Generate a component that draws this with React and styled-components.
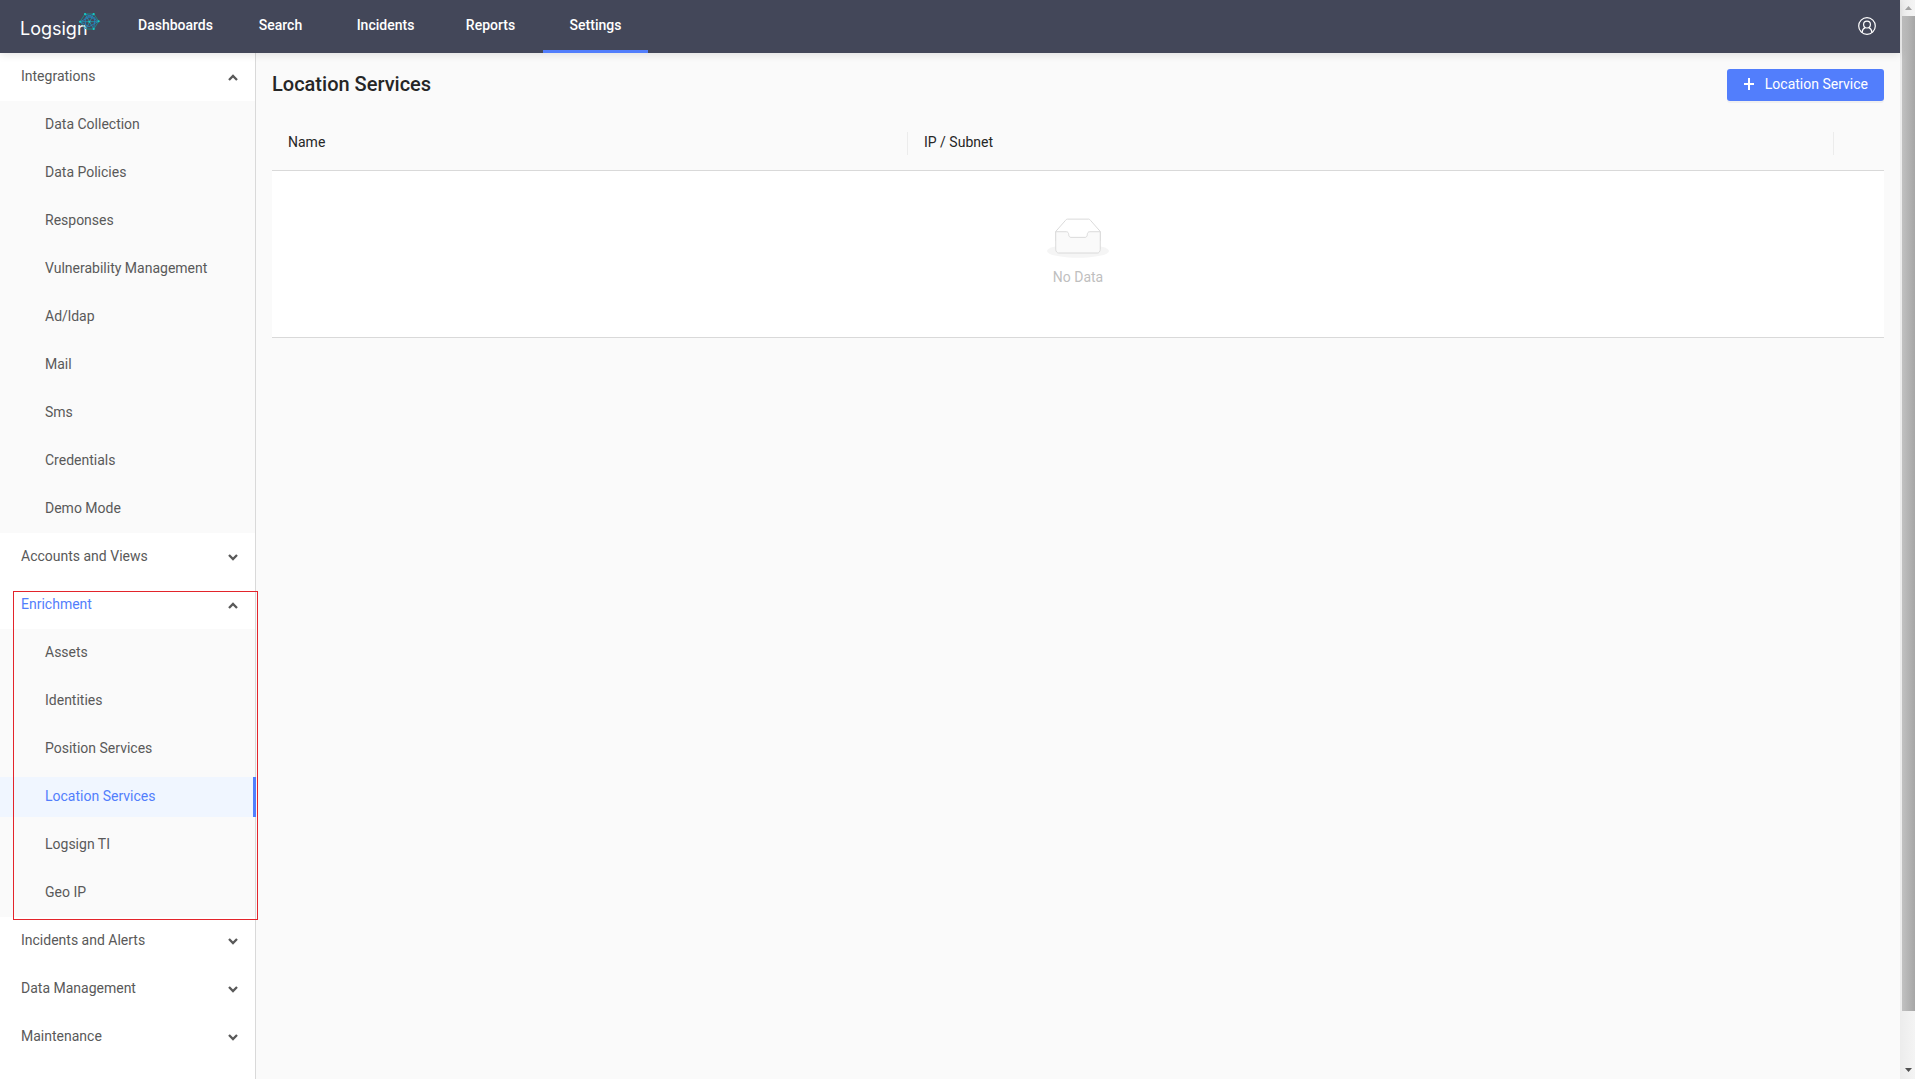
import React, { useState } from 'react'
import styled, { createGlobalStyle } from 'styled-components'

const GlobalStyle = createGlobalStyle`
    * {
        box-sizing: border-box;
    }
    body {
        margin: 0;
        font-family: Roboto, 'Liberation Sans', sans-serif;
        font-size: 14px;
        line-height: 22px;
        color: #262626;
        background-color: #fafafa;
        overflow: hidden;
    }
`

const Window = styled.div`
    display: flex;
    height: 100vh;
`
const Page = styled.div`
    flex: 1;
    display: flex;
    flex-direction: column;
    min-width: 0;
`

// header
const Header = styled.header`
    display: flex;
    align-items: center;
    height: 53px;
    flex-shrink: 0;
    padding: 0 24px 0 20px;
    background-color: #434759;
    box-shadow: 0 2px 8px rgba(0, 0, 0, 0.1);
    z-index: 1;
`
const LogoLink = styled.a`
    display: flex;
    width: 80px;
    margin-right: 23px;
`
const Nav = styled.nav`
    display: flex;
    flex: 1;
    height: 100%;
`
const NavLink = styled.a`
    width: 105px;
    height: 100%;
    padding-top: 14px;
    text-align: center;
    font-weight: 500;
    color: #fff;
    text-decoration: none;
    border-bottom: 3px solid ${props => (props.$active ? '#527efc' : 'transparent')};
`
const UserButton = styled.button`
    display: flex;
    padding: 0 0 1px;
    border: 0;
    background: none;
    color: #fff;
    cursor: pointer;
`

// sidebar
const Body = styled.div`
    display: flex;
    flex: 1;
    min-height: 0;
`
const Sidebar = styled.aside`
    width: 256px;
    flex-shrink: 0;
    background-color: #fff;
    border-right: 1px solid #d9d9d9;
`
const Group = styled.section`
    position: relative;
`
const GroupTitle = styled.button`
    display: flex;
    align-items: center;
    justify-content: space-between;
    width: 100%;
    height: 48px;
    padding: 0 17px 2px 21px;
    border: 0;
    background-color: #fff;
    font: inherit;
    color: ${props => (props.$active ? '#527efc' : '#595959')};
    cursor: pointer;
    svg {
        color: #595959;
        margin-top: 2px;
    }
`
const SubMenu = styled.div`
    display: flex;
    flex-direction: column;
    gap: 8px;
    padding: 4px 0;
    background-color: #fafafa;
`
const SubItem = styled.a`
    height: 40px;
    line-height: 38px;
    padding-left: 45px;
    text-decoration: none;
    color: ${props => (props.$active ? '#527efc' : '#595959')};
    background-color: ${props => (props.$active ? '#f0f6ff' : 'transparent')};
    margin-right: ${props => (props.$active ? '-1px' : '0')};
    border-right: ${props => (props.$active ? '3px solid #527efc' : '0')};
`
const Outline = styled.div`
    position: absolute;
    z-index: 1;
    top: 10px;
    right: -3px;
    bottom: -3px;
    left: 13px;
    border: 1px solid #e3242b;
    pointer-events: none;
`

// content
const Main = styled.main`
    flex: 1;
    padding: 16px;
    min-width: 0;
`
const TitleBar = styled.div`
    display: flex;
    align-items: flex-start;
    justify-content: space-between;
    margin-bottom: 24px;
`
const Title = styled.h1`
    margin: 0;
    font-size: 20px;
    line-height: 30px;
    font-weight: 500;
    color: #262626;
`
const AddButton = styled.button`
    display: flex;
    align-items: center;
    gap: 10px;
    height: 32px;
    padding: 0 16px 2px;
    border: 0;
    border-radius: 3px;
    background-color: #527efc;
    box-shadow: 0 2px 0 rgba(0, 0, 0, 0.04);
    font: inherit;
    color: #fff;
    cursor: pointer;
`
const Table = styled.table`
    width: 100%;
    border-collapse: collapse;
    table-layout: fixed;
`
const HeadCell = styled.th`
    position: relative;
    width: ${props => props.$width || 'auto'};
    height: 45px;
    padding: 0 16px 11px;
    text-align: left;
    font-weight: 400;
    border-bottom: 1px solid #d9d9d9;
    &:not(:last-child)::after {
        content: '';
        position: absolute;
        top: 7px;
        right: 0;
        width: 1px;
        height: 23px;
        background-color: #ececec;
    }
`
const EmptyCell = styled.td`
    height: 167px;
    padding: 0 0 2px;
    text-align: center;
    color: #bfbfbf;
    background-color: #fff;
    border-bottom: 1px solid #d9d9d9;
    svg {
        display: block;
        margin: 0 auto 8px;
    }
`

// scrollbar
const Scrollbar = styled.div`
    display: flex;
    flex-direction: column;
    align-items: center;
    width: 15px;
    background: linear-gradient(90deg, #ececec, #f4f4f4);
`
const ScrollArrow = styled.svg`
    height: 16px;
    width: 15px;
    flex-shrink: 0;
`
const ScrollTrack = styled.div`
    flex: 1;
    width: 100%;
    padding-left: 2px;
`
const ScrollThumb = styled.div`
    height: 95%;
    background: linear-gradient(90deg, #c1c1c1, #a6a6a6);
`

const menu = [
    {
        name: 'Integrations',
        items: [
            'Data Collection',
            'Data Policies',
            'Responses',
            'Vulnerability Management',
            'Ad/ldap',
            'Mail',
            'Sms',
            'Credentials',
            'Demo Mode',
        ],
    },
    { name: 'Accounts and Views', items: [] },
    {
        name: 'Enrichment',
        outlined: true,
        items: ['Assets', 'Identities', 'Position Services', 'Location Services', 'Logsign TI', 'Geo IP'],
    },
    { name: 'Incidents and Alerts', items: [] },
    { name: 'Data Management', items: [] },
    { name: 'Maintenance', items: [] },
]

const navItems = ['Dashboards', 'Search', 'Incidents', 'Reports', 'Settings']

function Logo() {
    return (
        <svg width='80' height='35' viewBox='0 0 80 35' aria-label='Logsign'>
            <text x='0' y='26' fill='#fff' fontFamily='Inter, sans-serif' fontSize='18' fontWeight='400'>
                Logsign
            </text>
            <g fill='none' strokeWidth='0.8'>
                <path d='M60 12.700 65 5h8.700l5 7.300-5 7.700H66z' stroke='#149b8e' />
                <path d='M60 12.700h18.700M65 5l8.700 15M73.700 5 66 20' stroke='#1b9fb0' />
                <path d='M60 12.700 70 8l8.700 4.300M65 5l10 4-1.300 11M73.700 5 65 9l1 11M60 12.700l9 5 9.700-5.400' stroke='#2389c4' />
            </g>
            <g fill='#16cfc4'>
                <circle cx='60' cy='12.700' r='1' />
                <circle cx='65' cy='5' r='1.100' />
                <circle cx='73.700' cy='5' r='1.100' />
                <circle cx='78.700' cy='12.300' r='1' />
                <circle cx='73.700' cy='20' r='1.100' />
                <circle cx='69.300' cy='12.700' r='1' />
            </g>
        </svg>
    )
}

function Chevron({ open }) {
    return (
        <svg width='10' height='7' viewBox='0 0 10 7' fill='none' stroke='currentColor' strokeWidth='2.300'>
            <path d={open ? 'M1 6 5 2 9 6' : 'M1 1 5 5 9 1'} />
        </svg>
    )
}

function EmptyIcon() {
    return (
        <svg width='62' height='40' viewBox='0 0 64 41'>
            <g transform='translate(0 1)' fill='none' fillRule='evenodd'>
                <ellipse fill='#f5f5f5' cx='32' cy='33' rx='32' ry='7' />
                <g fillRule='nonzero' stroke='#d9d9d9'>
                    <path d='M55 12.76L44.854 1.258C44.367.474 43.656 0 42.907 0H21.093c-.749 0-1.46.474-1.947 1.257L9 12.761V22h46v-9.24z' />
                    <path
                        d='M41.613 15.931c0-1.605.994-2.93 2.227-2.931H55v18.137C55 33.26 53.68 35 52.05 35h-40.1C10.32 35 9 33.259 9 31.137V13h11.16c1.233 0 2.227 1.323 2.227 2.928v.022c0 1.605 1.005 2.901 2.237 2.901h14.752c1.232 0 2.237-1.308 2.237-2.913v-.007z'
                        fill='#fafafa'
                    />
                </g>
            </g>
        </svg>
    )
}

function App() {
    const [closed, setClosed] = useState({})
    const [current, setCurrent] = useState('Location Services')

    const handleClickGroup = name => {
        setClosed({ ...closed, [name]: !closed[name] })
    }

    return (
        <>
            <GlobalStyle />
            <Window>
                <Page>
                    <Header>
                        <LogoLink href='#'>
                            <Logo />
                        </LogoLink>
                        <Nav>
                            {navItems.map(item => (
                                <NavLink key={item} href='#' $active={item === 'Settings'}>
                                    {item}
                                </NavLink>
                            ))}
                        </Nav>
                        <UserButton aria-label='Account'>
                            <svg width='18' height='18' viewBox='0 0 18 18' fill='none' stroke='currentColor' strokeWidth='1.2'>
                                <circle cx='9' cy='9' r='8.3' />
                                <circle cx='9' cy='7.6' r='3.4' />
                                <path d='M4 15.6c.3-2.8 1.6-4.4 3.2-5M14 15.6c-.3-2.8-1.6-4.4-3.2-5' />
                            </svg>
                        </UserButton>
                    </Header>
                    <Body>
                        <Sidebar>
                            {menu.map(group => {
                                const isOpen = group.items.length > 0 && !closed[group.name]
                                return (
                                    <Group key={group.name}>
                                        <GroupTitle
                                            $active={group.items.includes(current)}
                                            aria-expanded={isOpen}
                                            onClick={() => handleClickGroup(group.name)}
                                        >
                                            {group.name}
                                            <Chevron open={isOpen} />
                                        </GroupTitle>
                                        {isOpen && (
                                            <SubMenu>
                                                {group.items.map(item => (
                                                    <SubItem
                                                        key={item}
                                                        href='#'
                                                        $active={item === current}
                                                        onClick={() => setCurrent(item)}
                                                    >
                                                        {item}
                                                    </SubItem>
                                                ))}
                                            </SubMenu>
                                        )}
                                        {group.outlined && <Outline />}
                                    </Group>
                                )
                            })}
                        </Sidebar>
                        <Main>
                            <TitleBar>
                                <Title>Location Services</Title>
                                <AddButton>
                                    <svg width='12' height='12' viewBox='0 0 12 12' stroke='currentColor' strokeWidth='2'>
                                        <path d='M6 0v12M1 6h10' />
                                    </svg>
                                    Location Service
                                </AddButton>
                            </TitleBar>
                            <Table>
                                <thead>
                                    <tr>
                                        <HeadCell $width='636px'>Name</HeadCell>
                                        <HeadCell>IP / Subnet</HeadCell>
                                        <HeadCell $width='50px' aria-label='Actions' />
                                    </tr>
                                </thead>
                                <tbody>
                                    <tr>
                                        <EmptyCell colSpan={3}>
                                            <EmptyIcon />
                                            No Data
                                        </EmptyCell>
                                    </tr>
                                </tbody>
                            </Table>
                        </Main>
                    </Body>
                </Page>
                <Scrollbar>
                    <ScrollArrow viewBox='0 0 15 16'>
                        <path d='M5 10h7L8.500 6z' fill='#a3a3a3' />
                    </ScrollArrow>
                    <ScrollTrack>
                        <ScrollThumb />
                    </ScrollTrack>
                    <ScrollArrow viewBox='0 0 15 16'>
                        <path d='M5 5h7L8.500 9z' fill='#505050' />
                    </ScrollArrow>
                </Scrollbar>
            </Window>
        </>
    )
}

export default App
